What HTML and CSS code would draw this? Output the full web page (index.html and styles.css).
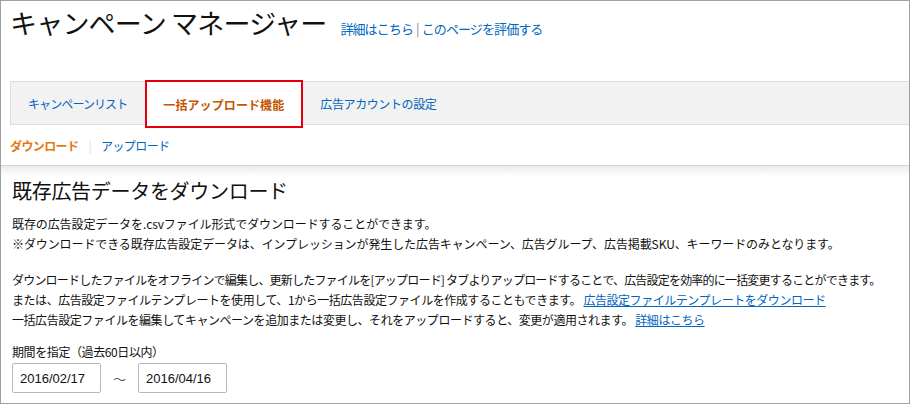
FILE: index.html
```html
<!DOCTYPE html>
<html lang="ja">
<head>
  <meta charset="UTF-8">
  <title>キャンペーン マネージャー</title>
  <link rel="stylesheet" href="styles.css">
</head>
<body>
  <div class="frame">
    <div class="header">
      <h1 class="title">キャンペーン マネージャー</h1>
      <div class="header-links">
        <a href="#">詳細はこちら</a>
        <span class="bar">|</span>
        <a href="#">このページを評価する</a>
      </div>
    </div>

    <div class="tabs">
      <a href="#" class="tab tab-first">キャンペーンリスト</a>
      <a href="#" class="tab tab-active">一括アップロード機能</a>
      <a href="#" class="tab">広告アカウントの設定</a>
    </div>

    <div class="subnav">
      <span class="sub-active">ダウンロード</span>
      <span class="sub-sep">|</span>
      <a href="#">アップロード</a>
    </div>

    <div class="content">
      <h2 class="section-title">既存広告データをダウンロード</h2>

      <p class="text text-wide">
        既存の広告設定データを.csvファイル形式でダウンロードすることができます。<br>
        ※ダウンロードできる既存広告設定データは、インプレッションが発生した広告キャンペーン、広告グループ、広告掲載SKU、キーワードのみとなります。
      </p>

      <p class="text">
        <span class="tight">ダウンロードしたファイルをオフラインで編集し、更新したファイルを[アップロード] タブよりアップロードすることで、広告設定を効率的に一括変更することができます。</span><br>
        または、広告設定ファイルテンプレートを使用して、1から一括広告設定ファイルを作成することもできます。 <a href="#" class="ul">広告設定ファイルテンプレートをダウンロード</a><br>
        一括広告設定ファイルを編集してキャンペーンを追加または変更し、それをアップロードすると、変更が適用されます。 <a href="#" class="ul">詳細はこちら</a>
      </p>

      <div class="period">
        <div class="period-label">期間を指定（過去60日以内）</div>
        <div class="period-row">
          <input type="text" class="date-input" value="2016/02/17">
          <span class="tilde">～</span>
          <input type="text" class="date-input" value="2016/04/16">
        </div>
      </div>
    </div>
  </div>
</body>
</html>
```

FILE: styles.css
```css
html, body {
  margin: 0;
  padding: 0;
  background-color: #ffffff;
}

body {
  font-family: "Noto Sans CJK JP", "Noto Sans", sans-serif;
  color: #111111;
}

a {
  color: #0066c0;
  text-decoration: none;
}

.frame {
  width: 910px;
  height: 404px;
  box-sizing: border-box;
  border: 1px solid #a0a0a0;
  overflow: hidden;
}

.header {
  display: flex;
  align-items: baseline;
  padding: 0 0 0 9px;
  height: 80px;
}

.title {
  margin: 0;
  font-size: 27px;
  font-weight: 400;
  line-height: 44px;
  letter-spacing: -0.8px;
  color: #111111;
}

.header-links {
  margin-left: 14px;
  font-size: 13px;
  letter-spacing: -0.9px;
}

.header-links .bar {
  color: #888888;
  margin: 0 1px;
}

.tabs {
  display: flex;
  margin-left: 9px;
  height: 42px;
  background-color: #f2f2f2;
  border-top: 1px solid #dddddd;
  border-left: 1px solid #dddddd;
  border-bottom: 1px solid #dddddd;
  align-items: stretch;
}

.tab {
  display: flex;
  align-items: center;
  padding: 0 18px 0 17px;
  font-size: 12px;
  letter-spacing: -0.4px;
  color: #0066c0;
}

.tab-first {
  letter-spacing: -0.9px;
}

.tab-active {
  margin-top: -2px;
  margin-bottom: -4px;
  padding: 0 17px 0 16px;
  background-color: #ffffff;
  border: 2px solid #e3000b;
  color: #c45500;
  font-weight: 700;
  letter-spacing: 0.1px;
}

.subnav {
  display: flex;
  align-items: center;
  height: 40px;
  padding-left: 9px;
  font-size: 12px;
  letter-spacing: -0.6px;
  border-bottom: 1px solid #d6d6d6;
}

.sub-active {
  color: #e47911;
  font-weight: 700;
}

.sub-sep {
  color: #dddddd;
  margin: 0 10px;
}

.content {
  padding: 12px 11px 0 11px;
  background: linear-gradient(#ececec, #ffffff 10px);
}

.section-title {
  margin: 0 0 10px 0;
  font-size: 20px;
  font-weight: 400;
  line-height: 26px;
  letter-spacing: -0.3px;
  color: #111111;
}

.text {
  margin: 0 0 13px 0;
  font-size: 12px;
  line-height: 20px;
  letter-spacing: -0.45px;
  white-space: nowrap;
  color: #111111;
}

.text-wide {
  margin-bottom: 16px;
  letter-spacing: -0.1px;
}

.tight {
  letter-spacing: -0.8px;
}

.ul {
  text-decoration: underline;
}

.period-label {
  font-size: 12px;
  line-height: 18px;
  letter-spacing: -0.4px;
  margin-bottom: 2px;
}

.period-row {
  display: flex;
  align-items: center;
}

.date-input {
  width: 89px;
  height: 30px;
  box-sizing: border-box;
  border: 1px solid #b8b8b8;
  border-radius: 2px;
  padding: 0 7px;
  font-family: "Liberation Sans", Arial, sans-serif;
  font-size: 13px;
  color: #111111;
}

.tilde {
  width: 37px;
  text-align: center;
  font-size: 13px;
  color: #555555;
}
```
